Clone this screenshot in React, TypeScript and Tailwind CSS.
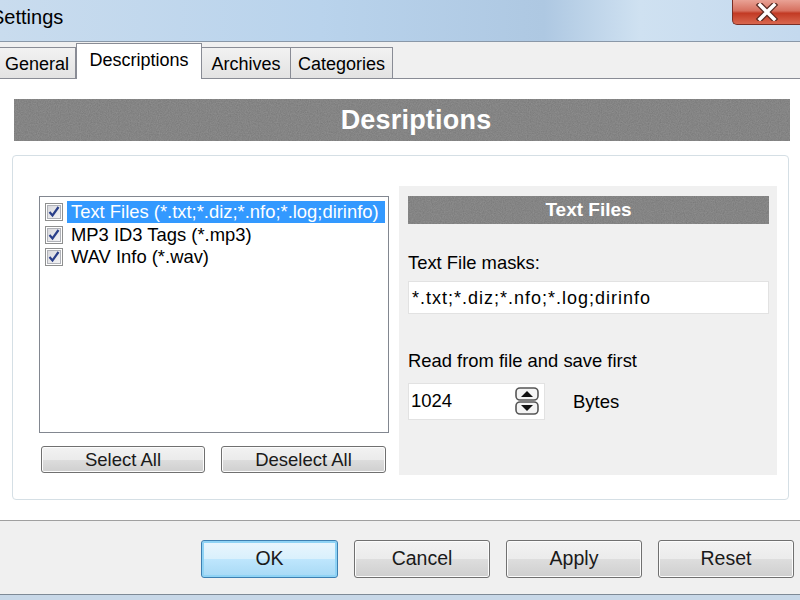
import React from "react";

const font = { fontFamily: '"Liberation Sans", Arial, sans-serif' };

function Noise({ id }: { id: string }) {
  return (
    <svg className="absolute inset-0 w-full h-full" preserveAspectRatio="none">
      <filter id={id}>
        <feTurbulence type="fractalNoise" baseFrequency="0.9" numOctaves="2" stitchTiles="stitch" />
        <feColorMatrix type="matrix" values="0 0 0 0 0.55  0 0 0 0 0.55  0 0 0 0 0.55  0 0 0 0.35 0" />
      </filter>
      <rect width="100%" height="100%" filter={`url(#${id})`} />
    </svg>
  );
}

function Check() {
  return (
    <svg width="18" height="18" viewBox="0 0 18 18" className="shrink-0">
      <defs>
        <linearGradient id="cbg" x1="0" y1="0" x2="1" y2="1">
          <stop offset="0" stopColor="#d8d8dc" />
          <stop offset="1" stopColor="#f4f4f6" />
        </linearGradient>
      </defs>
      <rect x="0.5" y="0.5" width="17" height="17" fill="#ffffff" stroke="#8e8f8f" />
      <rect x="2.5" y="2.5" width="13" height="13" fill="url(#cbg)" stroke="#b0b2b8" />
      <path d="M4.5 9 L7.5 12.5 L13.5 4" fill="none" stroke="#2a3f8a" strokeWidth="2.2" />
    </svg>
  );
}

function Spin() {
  return (
    <svg width="24" height="28" viewBox="0 0 24 28">
      <rect x="1" y="1" width="22" height="12" rx="4" fill="#f4f4f4" stroke="#555" strokeWidth="1.6" />
      <rect x="1" y="15" width="22" height="12" rx="4" fill="#f4f4f4" stroke="#555" strokeWidth="1.6" />
      <path d="M6 10 L12 4 L18 10 Z" fill="#111" />
      <path d="M6 18 L12 24 L18 18 Z" fill="#111" />
    </svg>
  );
}

function WinButton({ children, className = "", primary = false }: { children: React.ReactNode; className?: string; primary?: boolean }) {
  return (
    <div
      className={
        "flex items-center justify-center rounded-[3px] border text-[#1a1a1a] " +
        (primary
          ? "border-[#3c7fb1] bg-[linear-gradient(#eaf6fd_0%,#d9f0fc_50%,#bee6fd_51%,#a7d9f5_100%)] shadow-[inset_0_0_0_2px_#8fd3f5] "
          : "border-[#707070] bg-[linear-gradient(#f2f2f2_0%,#ebebeb_50%,#dddddd_51%,#cfcfcf_100%)] shadow-[inset_0_0_0_1px_#fcfcfc] ") +
        className
      }
    >
      {children}
    </div>
  );
}

export default function App() {
  return (
    <div className="w-[800px] h-[600px] overflow-hidden flex flex-col bg-white text-black" style={font}>
      {/* Title bar */}
      <div className="h-[42px] shrink-0 flex items-start justify-between border-b border-[#8a98a8] bg-[linear-gradient(90deg,#c9dcee_0%,#b9d3ec_40%,#aec8e2_68%,#cfe1f1_80%,#c4d9ee_100%)]">
        <div className="text-[20px] leading-none mt-[7px] -ml-[9px]">Settings</div>
        <div className="w-[68px] h-[25px] rounded-bl-[5px] border border-t-0 border-r-0 border-[#7a2f26] bg-[linear-gradient(#e9a295_0%,#d6705f_45%,#c23a24_55%,#d9674f_100%)] flex items-center justify-center">
          <svg width="24" height="18" viewBox="0 0 24 18">
            <path d="M5 2 L19 16 M19 2 L5 16" stroke="#5a2a22" strokeWidth="6" strokeLinecap="square" />
            <path d="M5 2 L19 16 M19 2 L5 16" stroke="#ffffff" strokeWidth="3.5" strokeLinecap="square" />
          </svg>
        </div>
      </div>

      {/* Tabs */}
      <div className="h-[37px] shrink-0 bg-[#f0f0f0] flex items-end border-b border-[#898c95] relative">
        <div className="h-[31px] w-[77px] -ml-[1px] border border-b-0 border-[#898c95] bg-[linear-gradient(#f2f2f2,#e3e3e3)] flex items-center pl-[5px] text-[18px] pt-[2px]">General</div>
        <div className="h-[36px] w-[126px] border border-b-0 border-[#898c95] bg-white flex items-center justify-center text-[18px] -mb-[1px] pb-[3px] relative z-10">Descriptions</div>
        <div className="h-[31px] w-[89px] border border-b-0 border-l-0 border-[#898c95] bg-[linear-gradient(#f2f2f2,#e3e3e3)] flex items-center justify-center text-[18px] pt-[2px]">Archives</div>
        <div className="h-[31px] w-[102px] border border-b-0 border-l-0 border-[#898c95] bg-[linear-gradient(#f2f2f2,#e3e3e3)] flex items-center justify-center text-[18px] pt-[2px]">Categories</div>
      </div>

      {/* Content */}
      <div className="flex-1 bg-white flex flex-col">
        <div className="mt-[20px] ml-[14px] w-[776px] h-[42px] relative bg-[#777777] flex items-center justify-center pl-[28px] pt-[1px]">
          <Noise id="n1" />
          <span className="relative text-white font-bold text-[27px] tracking-[0.2px]">Desriptions</span>
        </div>

        <div className="mt-[14px] ml-[12px] w-[777px] h-[345px] border border-[#d5dfe5] rounded-[4px] flex">
          <div className="ml-[26px] mt-[40px] w-[350px] flex flex-col">
            <div className="h-[237px] border border-[#828790] bg-white pt-[4px] pl-[5px] pr-[3px]">
              {[
                "Text Files (*.txt;*.diz;*.nfo;*.log;dirinfo)",
                "MP3 ID3 Tags (*.mp3)",
                "WAV Info (*.wav)",
              ].map((t, i) => (
                <div key={t} className="h-[22.5px] flex items-center gap-[4px]">
                  <Check />
                  <span
                    className={
                      "text-[18.4px] leading-[22px] pl-[4px] pr-[4px] flex-1 whitespace-nowrap " +
                      (i === 0 ? "bg-[#3399ff] text-white" : "text-black")
                    }
                  >
                    {t}
                  </span>
                </div>
              ))}
            </div>
            <div className="mt-[13px] flex gap-[16px] pl-[2px]">
              <WinButton className="w-[164px] h-[27px] text-[18.5px]">Select All</WinButton>
              <WinButton className="w-[165px] h-[27px] text-[18.5px]">Deselect All</WinButton>
            </div>
          </div>

          <div className="ml-[10px] mt-[30px] w-[378px] h-[289px] bg-[#f0f0f0] pt-[10px] pl-[9px] pr-[8px] flex flex-col">
            <div className="h-[28px] relative bg-[#777777] flex items-center justify-center pt-[1px]">
              <Noise id="n2" />
              <span className="relative text-white font-bold text-[19px]">Text Files</span>
            </div>
            <div className="mt-[30px] text-[18.4px] leading-none">Text File masks:</div>
            <div className="mt-[9px] h-[33px] bg-white border border-[#e2e2e2] flex items-center pl-[3px] pt-[1px] text-[18px] tracking-[1px]">*.txt;*.diz;*.nfo;*.log;dirinfo</div>
            <div className="mt-[38px] text-[18.4px] leading-none">Read from file and save first</div>
            <div className="mt-[12px] flex items-center">
              <div className="w-[137px] h-[37px] bg-white border border-[#e2e2e2] flex items-center justify-between pl-[2px] pr-[5px] text-[18.5px]">
                <span>1024</span>
                <Spin />
              </div>
              <span className="ml-[28px] mt-[1px] text-[18.5px]">Bytes</span>
            </div>
          </div>
        </div>
      </div>

      {/* Footer */}
      <div className="h-[74px] shrink-0 bg-[#f0f0f0] border-t border-[#a0a0a0] flex items-center justify-end gap-[16px] pr-[6px] pt-[2px]">
        <WinButton primary className="w-[137px] h-[38px] text-[19.5px]">OK</WinButton>
        <WinButton className="w-[136px] h-[38px] text-[19.5px]">Cancel</WinButton>
        <WinButton className="w-[136px] h-[38px] text-[19.5px]">Apply</WinButton>
        <WinButton className="w-[136px] h-[38px] text-[19.5px]">Reset</WinButton>
      </div>
      <div className="h-[6px] shrink-0 border-t border-[#7e8a96] bg-[#c8d8e8]"></div>
    </div>
  );
}
